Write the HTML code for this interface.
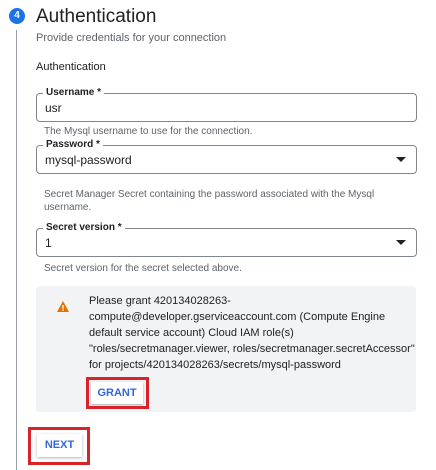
<!DOCTYPE html>
<html><head><style>
body{margin:0;width:436px;height:470px;background:#fff;font-family:"Liberation Sans",sans-serif;position:relative;overflow:hidden;color:#202124}
.a{position:absolute}
.vl{left:16px;top:30px;width:1px;height:440px;background:#9aa0a6}
.num{left:9px;top:8px;width:16px;height:16px;border-radius:50%;background:#1a73e8;color:#fff;font-size:10px;font-weight:bold;text-align:center;line-height:16px}
.f{left:36px;width:379px;height:27px;border:1px solid #80868b;border-radius:4px}
.lab{position:absolute;left:6px;top:-7px;background:#fff;padding:0 3px;font-size:10px;font-weight:bold;line-height:12px}
.val{position:absolute;left:8px;top:7px;font-size:12px}
.h{left:44px;font-size:10px;color:#5f6368;line-height:13px}
.arr{position:absolute;right:10px;top:11px;width:0;height:0;border-left:5px solid transparent;border-right:5px solid transparent;border-top:5px solid #202124}
</style></head><body>
<div class="a vl"></div>
<div class="a num">4</div>
<div class="a" style="left:36px;top:6px;font-size:19px;">Authentication</div>
<div class="a" style="left:36px;top:32px;font-size:11px;color:#5f6368">Provide credentials for your connection</div>
<div class="a" style="left:36px;top:61px;font-size:11px">Authentication</div>
<div class="a f" style="top:93px"><span class="lab">Username *</span><span class="val">usr</span></div>
<div class="a h" style="top:125px">The Mysql username to use for the connection.</div>
<div class="a f" style="top:145px"><span class="lab">Password *</span><span class="val">mysql-password</span><span class="arr"></span></div>
<div class="a h" style="top:188px;width:370px">Secret Manager Secret containing the password associated with the Mysql username.</div>
<div class="a f" style="top:228px"><span class="lab">Secret version *</span><span class="val">1</span><span class="arr"></span></div>
<div class="a h" style="top:262px">Secret version for the secret selected above.</div>
<div class="a" style="left:36px;top:286px;width:380px;height:126px;background:#f1f3f4;border-radius:3px"></div>
<svg class="a" style="left:57px;top:301px" width="12" height="11" viewBox="0 0 12 11"><path d="M6 0L12 11H0Z" fill="#e37400"/><rect x="5.3" y="4" width="1.4" height="3.5" fill="#fff"/><rect x="5.3" y="8.3" width="1.4" height="1.4" fill="#fff"/></svg>
<div class="a" style="left:89px;top:293px;font-size:11px;line-height:16px;width:330px">Please grant 420134028263-<br>compute@developer.gserviceaccount.com (Compute Engine<br>default service account) Cloud IAM role(s)<br>"roles/secretmanager.viewer, roles/secretmanager.secretAccessor"<br>for projects/420134028263/secrets/mysql-password</div>
<div class="a" style="left:86px;top:377px;width:57px;height:26px;border:3px solid #d9232a;"><div style="margin:2px 3px 2px 2px;height:22px;background:#fff;box-shadow:0 1px 2px rgba(0,0,0,.3);color:#3367d6;font-size:11px;font-weight:bold;text-align:center;line-height:22px">GRANT</div></div>
<div class="a" style="left:28px;top:427px;width:56px;height:32px;border:3px solid #d9232a;"><div style="margin:4px 5px 5px 6px;height:23px;background:#fff;box-shadow:0 1px 3px rgba(0,0,0,.3);color:#3367d6;font-size:11px;font-weight:bold;text-align:center;line-height:23px">NEXT</div></div>
</body></html>
